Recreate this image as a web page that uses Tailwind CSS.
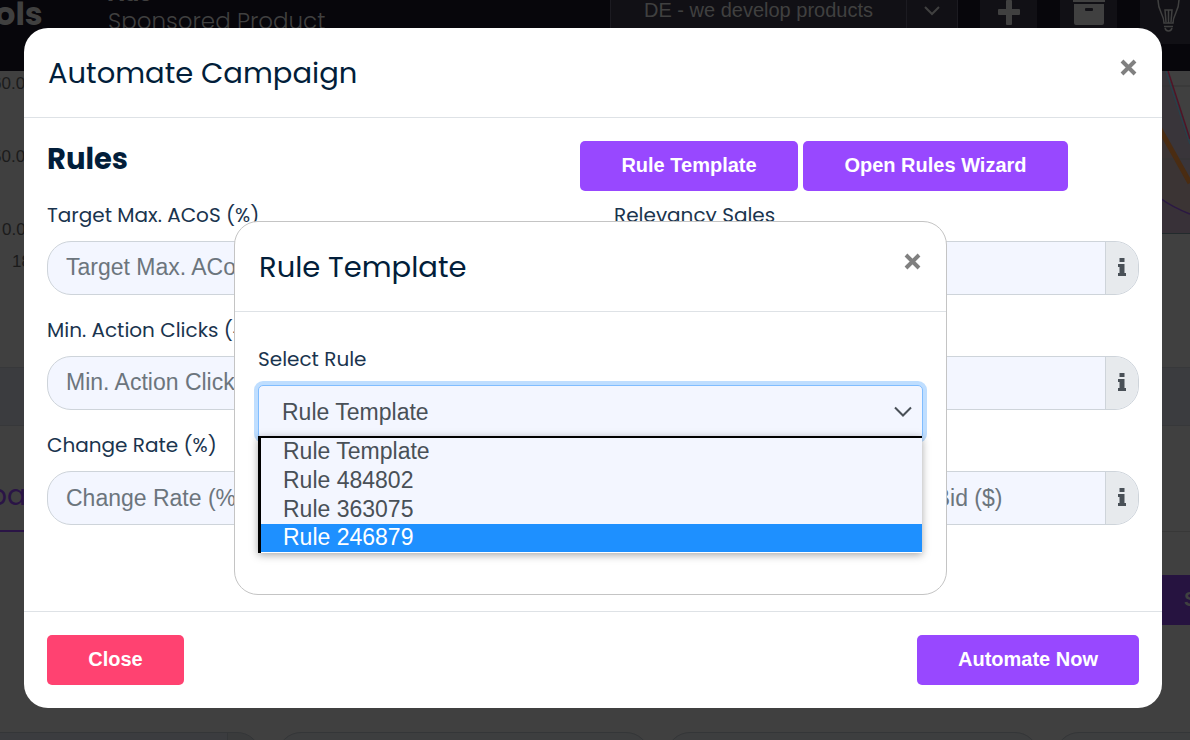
<!DOCTYPE html>
<html lang="en">
<head>
<meta charset="utf-8">
<meta name="viewport" content="width=device-width, initial-scale=1">
<title>Automate Campaign</title>
<script src="https://cdn.jsdelivr.net/npm/@tailwindcss/browser@4"></script>
</head>
<body class="h-screen overflow-hidden bg-[#404040] font-['Poppins','Inter',sans-serif] text-[#021e3a]">

<!-- Dimmed page under the dialogs -->
<div class="h-screen overflow-hidden" aria-hidden="true">
  <header class="flex h-[71px] items-start bg-[#07060b] text-[#404040]">
    <div class="-ml-[5px] w-[113px] shrink-0 text-[32px] leading-7 font-bold">ols</div>
    <div class="-mt-[18px]">
      <div class="h-6 text-[22px] leading-6 font-bold">Ads</div>
      <div class="text-[23px] leading-[30px] font-light">Sponsored Product</div>
    </div>
    <div class="ml-auto flex">
      <div class="flex h-11 w-[348px] border-x border-[#1c1b21] bg-[#111015] font-['Liberation_Sans',sans-serif] text-[20px] leading-5">
        <span class="grow pl-[33px]">DE - we develop products</span>
        <span class="w-[51px] border-l border-[#1c1b21] pt-1">
          <svg class="mx-auto" width="16" height="12" viewBox="0 0 16 12" fill="none" stroke="#404040" stroke-width="2"><path d="M1 3l7 7 7-7"/></svg>
        </span>
      </div>
      <div class="ml-[22px] h-11 w-[57px] bg-[#111015]">
        <svg class="mx-auto" width="22" height="26" viewBox="0 0 22 26" fill="#404040"><path d="M8 1q0-1 1-1h4q1 0 1 1v8h7q1 0 1 1v4q0 1-1 1h-7v9q0 1-1 1H9q-1 0-1-1v-9H1q-1 0-1-1v-4q0-1 1-1h7z"/></svg>
      </div>
      <div class="ml-[23px] h-11 w-[57px] bg-[#111015]">
        <svg class="mx-auto" width="32" height="28" viewBox="0 0 32 28" fill="#404040"><path d="M0 0h32v2H0zM1 4h30v19q0 2-2 2H3q-2 0-2-2z"/><rect x="12" y="8" width="8" height="3" rx="1" fill="#111015"/></svg>
      </div>
      <div class="ml-[23px] h-11 w-[50px] bg-[#111015]">
        <svg class="ml-[17px]" width="23" height="33" viewBox="0 0 23 33" fill="none" stroke="#404040" stroke-width="1.500"><path d="M1 0c0 12 6 14 6 23h9c0-9 6-11 6-23M9 22L8 10h7l-1 12M11.500 10v13M7 26.500h9M8 28c1 4 6 4 7 0"/></svg>
      </div>
    </div>
  </header>
  <section class="flex h-[296px] justify-between font-['Liberation_Sans',sans-serif] text-[17px] text-[#1b1b1b]">
    <div class="w-[26px]">
      <div class="-ml-2 h-[73px] pt-[3px] leading-5">60.0</div>
      <div class="-ml-2 h-[73px] pt-[3px] leading-5">50.0</div>
      <div class="h-8 pt-[3px] pl-[2px] leading-5">0.0</div>
      <div class="pt-[3px] pl-3 leading-5">18</div>
    </div>
    <svg width="40" height="170" viewBox="1150 71 40 170" fill="none">
      <path d="M1150 71h17l23 70v93h-40z" fill="#39353a"/>
      <path d="M1190 128V71h-23z" fill="#404040"/>
      <path d="M1150 110l40 74v50h-40z" fill="#3b3434"/>
      <path d="M1150 193l40 22v19h-40z" fill="#383138"/>
      <path d="M1150 86h40M1150 159h40" stroke="#353535"/>
      <path d="M1166 71l24 73" stroke="#28404a" stroke-width="1.500"/>
      <path d="M1168 71l22 68" stroke="#501426" stroke-width="1.500"/>
      <path d="M1156 122l34 61" stroke="#4a2c12" stroke-width="5"/>
      <path d="M1160 198q12 9 30 16" stroke="#2b1744" stroke-width="1.500"/>
      <path d="M1150 233.500h40" stroke="#222a2c"/>
    </svg>
  </section>
  <div class="h-[59px] border-y border-[#37383a] bg-[#3b3c3f]"></div>
  <div class="h-[106px] border-b border-[#383838]">
    <div class="-ml-4 h-[106px] w-40 border-b-2 border-[#2a1446] pt-[54px] text-[28px] leading-8 text-[#2a1446]"><span class="pl-1">pa</span></div>
  </div>
  <div class="mt-[43px] flex justify-end">
    <div class="h-[50px] w-[46px] overflow-hidden bg-[#261340] pl-10 font-['Liberation_Sans',sans-serif] text-xl leading-[48px] font-bold text-[#404040]">S</div>
  </div>
  <div class="mt-[107px] -ml-28 flex gap-4">
    <div class="flex h-[54px] w-[373px] shrink-0 overflow-hidden rounded-[24px] border border-[#343638] bg-[#3b3c3f]"><span class="ml-auto w-[33px] border-l border-[#343638] bg-[#3a3b3c]"></span></div>
    <div class="h-[54px] w-[373px] shrink-0 rounded-[24px] border border-[#343638] bg-[#3d3e3f]"></div>
    <div class="h-[54px] w-[373px] shrink-0 rounded-[24px] border border-[#343638] bg-[#3d3e3f]"></div>
    <div class="h-[54px] w-[373px] shrink-0 rounded-[24px] border border-[#343638] bg-[#3d3e3f]"></div>
  </div>
</div>

<!-- Automate Campaign dialog -->
<div class="fixed inset-0 pt-7 pr-7 pl-6">
  <div role="dialog" aria-labelledby="campaign-title" class="rounded-[24px] bg-white">
    <div class="flex h-[90px] items-center justify-between border-b border-[#dee2e6] pr-[25px] pl-6">
      <h1 id="campaign-title" class="text-[29px] leading-10">Automate Campaign</h1>
      <button type="button" aria-label="Close dialog" class="mb-[10px]"><svg width="17" height="17" viewBox="0 0 17 17" stroke="#808080" stroke-width="4"><path d="M2 2l13 13M15 2L2 15"/></svg></button>
    </div>
    <form>
      <div class="px-[23px] pt-[23px] pb-[86px]">
        <div class="mb-3 flex items-start justify-between">
          <h2 class="text-[29px] leading-9 font-bold">Rules</h2>
          <div class="mr-[71px] flex gap-[5px] font-['Liberation_Sans',sans-serif] text-xl leading-6 font-bold text-white">
            <button type="button" class="h-[50px] w-[218px] rounded-[5px] bg-[#9848ff] pb-[2px]">Rule Template</button>
            <button type="button" class="h-[50px] w-[265px] rounded-[5px] bg-[#9848ff] pb-[2px]">Open Rules Wizard</button>
          </div>
        </div>
        <div class="grid grid-cols-2 gap-x-[42px] gap-y-[23px]">
          <div>
            <label for="acos" class="mb-[14px] block text-[20px] leading-6 text-[#1a344e]">Target Max. ACoS (%)</label>
            <input id="acos" type="text" placeholder="Target Max. ACoS" class="block h-[54px] w-full rounded-[24px] border border-[#ced4da] bg-[#f3f6ff] px-[18px] pb-[2px] font-['Liberation_Sans',sans-serif] text-[23px] placeholder:text-[#6c757d]">
          </div>
          <div>
            <label for="relevancy" class="mb-[14px] block text-[20px] leading-6 text-[#1a344e]">Relevancy Sales</label>
            <div class="flex h-[54px] overflow-hidden rounded-[24px] border border-[#ced4da] bg-[#f3f6ff]">
              <input id="relevancy" type="text" class="min-w-0 grow px-[18px]">
              <button type="button" aria-label="About relevancy sales" class="flex w-[33px] items-center justify-center border-l border-[#ced4da] bg-[#e7eaed] pb-[2px]"><svg width="10" height="18" viewBox="0 0 10 18" fill="#495057"><path d="M2.500 0h5v4h-5zM1 6h6.500v9H9v3H1v-3h1.500V9H1z"/></svg></button>
            </div>
          </div>
          <div>
            <label for="clicks" class="mb-[14px] block text-[20px] leading-6 text-[#1a344e]">Min. Action Clicks (#)</label>
            <input id="clicks" type="text" placeholder="Min. Action Clicks" class="block h-[54px] w-full rounded-[24px] border border-[#ced4da] bg-[#f3f6ff] px-[18px] pb-[2px] font-['Liberation_Sans',sans-serif] text-[23px] placeholder:text-[#6c757d]">
          </div>
          <div class="pt-[38px]">
            <div class="flex h-[54px] overflow-hidden rounded-[24px] border border-[#ced4da] bg-[#f3f6ff]">
              <input aria-label="Value" type="text" class="min-w-0 grow px-[18px]">
              <button type="button" aria-label="About this value" class="flex w-[33px] items-center justify-center border-l border-[#ced4da] bg-[#e7eaed] pb-[2px]"><svg width="10" height="18" viewBox="0 0 10 18" fill="#495057"><path d="M2.500 0h5v4h-5zM1 6h6.500v9H9v3H1v-3h1.500V9H1z"/></svg></button>
            </div>
          </div>
          <div>
            <label for="rate" class="mb-[14px] block text-[20px] leading-6 text-[#1a344e]">Change Rate (%)</label>
            <input id="rate" type="text" placeholder="Change Rate (%)" class="block h-[54px] w-full rounded-[24px] border border-[#ced4da] bg-[#f3f6ff] px-[18px] font-['Liberation_Sans',sans-serif] text-[23px] placeholder:text-[#6c757d]">
          </div>
          <div class="pt-[38px]">
            <div class="flex h-[54px] overflow-hidden rounded-[24px] border border-[#ced4da] bg-[#f3f6ff] font-['Liberation_Sans',sans-serif] text-[23px]">
              <input aria-label="Minimum bid" type="text" placeholder="Min. Bid ($)" class="w-0 min-w-0 grow px-[18px] placeholder:text-[#6c757d]">
              <input aria-label="Maximum bid" type="text" placeholder="Max. Bid ($)" class="w-0 min-w-0 grow border-l border-[#ced4da] px-[18px] placeholder:text-[#6c757d]">
              <button type="button" aria-label="About bids" class="flex w-[33px] items-center justify-center border-l border-[#ced4da] bg-[#e7eaed] pb-[2px]"><svg width="10" height="18" viewBox="0 0 10 18" fill="#495057"><path d="M2.500 0h5v4h-5zM1 6h6.500v9H9v3H1v-3h1.500V9H1z"/></svg></button>
            </div>
          </div>
        </div>
      </div>
      <div class="flex justify-between border-t border-[#dee2e6] p-[23px] font-['Liberation_Sans',sans-serif] text-xl leading-6 font-bold text-white">
        <button type="button" class="h-[50px] w-[137px] rounded-[5px] bg-[#ff4271] pb-[2px]">Close</button>
        <button type="button" class="h-[50px] w-[222px] rounded-[5px] bg-[#9848ff] pb-[2px]">Automate Now</button>
      </div>
    </form>
  </div>
</div>

<!-- Rule Template dialog -->
<div class="fixed inset-0 pt-[221px] pr-[243px] pl-[234px]">
  <div role="dialog" aria-labelledby="template-title" class="rounded-[24px] border border-[#c4c4c4] bg-white">
    <div class="flex h-[90px] items-center justify-between border-b border-[#dee2e6] pr-[25px] pl-6">
      <h2 id="template-title" class="text-[29px] leading-10">Rule Template</h2>
      <button type="button" aria-label="Close rule template" class="mb-[10px]"><svg width="17" height="17" viewBox="0 0 17 17" stroke="#808080" stroke-width="4"><path d="M2 2l13 13M15 2L2 15"/></svg></button>
    </div>
    <div class="px-[23px] pt-[35px] pb-[155px]">
      <label for="rule" class="mb-[14px] block text-[20px] leading-6 text-[#1a344e]">Select Rule</label>
      <div class="relative font-['Liberation_Sans',sans-serif] text-[23px] text-[#495057]">
        <select id="rule" class="block h-[54px] w-full appearance-none rounded-[5px] border border-[#80bdff] bg-[#f3f6ff] px-[23px] ring-4 ring-[#bfdeff]">
          <option>Rule Template</option>
          <option>Rule 484802</option>
          <option>Rule 363075</option>
          <option>Rule 246879</option>
        </select>
        <svg class="pointer-events-none absolute top-[21px] right-[11px]" width="18" height="12" viewBox="0 0 18 12" fill="none" stroke="#495057" stroke-width="2"><path d="M1 1.500l8 8 8-8"/></svg>
        <ul role="listbox" aria-label="Rules" class="absolute right-px left-0 top-[51px] border-t-2 border-l-3 border-black bg-[#f3f6ff] leading-[27px] shadow-[0_2px_8px_rgba(0,0,0,0.35)]">
          <li role="option" class="h-[29px] pl-[22px]">Rule Template</li>
          <li role="option" class="h-[29px] pl-[22px]">Rule 484802</li>
          <li role="option" class="h-[28px] pl-[22px]">Rule 363075</li>
          <li role="option" aria-selected="true" class="h-[29px] border-b border-white bg-[#1e90ff] pl-[22px] text-white">Rule 246879</li>
        </ul>
      </div>
    </div>
  </div>
</div>
</body>
</html>
